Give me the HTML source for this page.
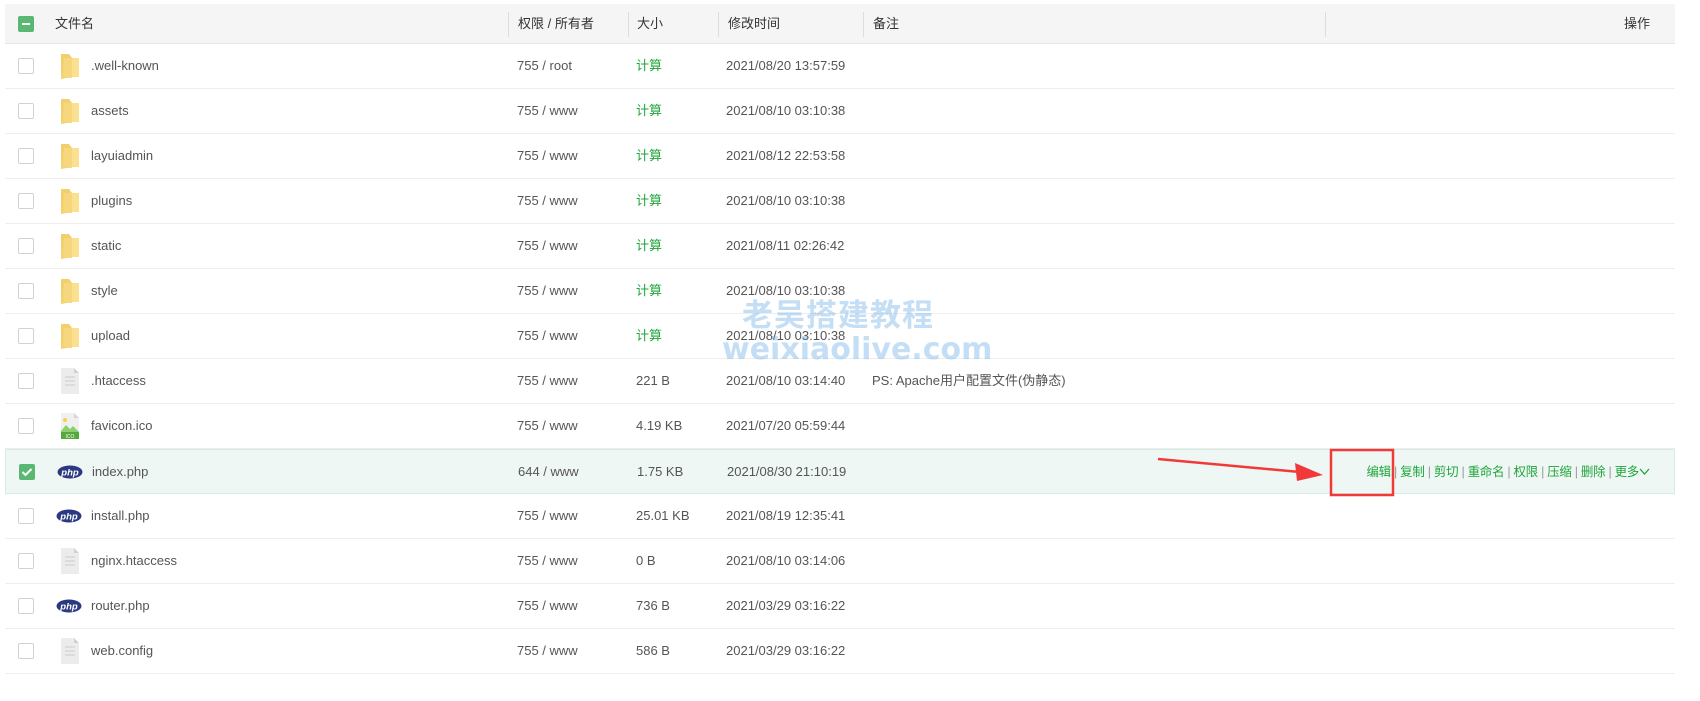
<!DOCTYPE html>
<html><head><meta charset="utf-8"><style>
*{margin:0;padding:0;box-sizing:border-box}
body{width:1700px;height:701px;background:#fff;font-family:"Liberation Sans","Noto Sans CJK SC",sans-serif;font-size:13px;color:#555;position:relative;overflow:hidden}
.hdr{position:absolute;left:5px;top:4px;width:1670px;height:40px;background:#f5f5f5;border-bottom:1px solid #e6e6e6;color:#333}
.row{position:absolute;left:5px;width:1670px;height:45px;border-bottom:1px solid #eee}
.row.sel{background:#eff7f5;border:1px solid #d5ece3}
.c{position:absolute;top:0;line-height:44px;white-space:nowrap}
.sep{position:absolute;top:9px;width:1px;height:25px;background:#ddd}
.cb{position:absolute;left:13px;top:14px;width:16px;height:16px;border:1px solid #d2d2d2;border-radius:2px;background:#fff}
.cb.on{background:#5bb872;border-color:#5bb872}
.g{color:#20a53a}
.ic{position:absolute;left:55px;top:10px}
.wm{position:absolute;color:rgba(100,170,230,.38);font-weight:bold;white-space:nowrap}
</style></head><body>
<div class="hdr">
<div class="cb on" style="top:12px"><div style="position:absolute;left:3px;top:6px;width:8px;height:2px;background:#fff"></div></div>
<div class="c" style="left:50px;line-height:40px">文件名</div>
<div class="sep" style="left:503px;top:8px"></div><div class="c" style="left:513px;line-height:40px">权限 / 所有者</div>
<div class="sep" style="left:623px;top:8px"></div><div class="c" style="left:632px;line-height:40px">大小</div>
<div class="sep" style="left:713px;top:8px"></div><div class="c" style="left:723px;line-height:40px">修改时间</div>
<div class="sep" style="left:858px;top:8px"></div><div class="c" style="left:868px;line-height:40px">备注</div>
<div class="sep" style="left:1320px;top:8px"></div><div class="c" style="right:25px;line-height:40px">操作</div>
</div>
<div id="rows"></div>
<script>
var d=[["f",".well-known","755 / root","计算","2021/08/20 13:57:59",""],
["f","assets","755 / www","计算","2021/08/10 03:10:38",""],
["f","layuiadmin","755 / www","计算","2021/08/12 22:53:58",""],
["f","plugins","755 / www","计算","2021/08/10 03:10:38",""],
["f","static","755 / www","计算","2021/08/11 02:26:42",""],
["f","style","755 / www","计算","2021/08/10 03:10:38",""],
["f","upload","755 / www","计算","2021/08/10 03:10:38",""],
["t",".htaccess","755 / www","221 B","2021/08/10 03:14:40","PS: Apache用户配置文件(伪静态)"],
["i","favicon.ico","755 / www","4.19 KB","2021/07/20 05:59:44",""],
["p","index.php","644 / www","1.75 KB","2021/08/30 21:10:19",""],
["p","install.php","755 / www","25.01 KB","2021/08/19 12:35:41",""],
["t","nginx.htaccess","755 / www","0 B","2021/08/10 03:14:06",""],
["p","router.php","755 / www","736 B","2021/03/29 03:16:22",""],
["t","web.config","755 / www","586 B","2021/03/29 03:16:22",""]];
var icons={
f:'<svg class="ic" width="20" height="26" viewBox="0 0 20 26" style="top:9px"><path d="M1 1h8l3 4v19l-11 2z" fill="#f1cf6b"/><path d="M4 5h15v19H4z" fill="#fbe08f"/><path d="M4 5h8v20H1z" fill="#f5d478" opacity=".8"/></svg>',
t:'<svg class="ic" width="20" height="26" viewBox="0 0 20 26" style="top:9px"><path d="M1 0h13l5 5v21H1z" fill="#ececec"/><path d="M14 0v5h5z" fill="#d0d0d0"/><path d="M5 9h10M5 13h10M5 17h10" stroke="#d6d6d6" stroke-width="1.5"/></svg>',
i:'<svg class="ic" width="20" height="26" viewBox="0 0 20 26" style="top:9px"><path d="M1 0h13l5 5v21H1z" fill="#f0f0f0"/><path d="M14 0v5h5z" fill="#d5d5d5"/><circle cx="5" cy="7" r="2" fill="#f3d34a"/><path d="M1 18l5-6 4 4 3-3 6 6v7H1z" fill="#8ccf6e"/><rect x="1" y="19" width="18" height="7" fill="#56a83c"/><text x="10" y="25" font-size="5" fill="#fff" text-anchor="middle" font-family="Liberation Sans">ICO</text></svg>',
p:'<svg class="ic" width="26" height="14" viewBox="0 0 26 14" style="top:15px;left:51px"><ellipse cx="13" cy="7" rx="12.5" ry="6.5" fill="#2b3a80"/><text x="13" y="10.5" font-size="9.5" font-style="italic" font-weight="bold" fill="#fff" text-anchor="middle" font-family="Liberation Sans">php</text></svg>'};
var h="";
d.forEach(function(r,i){
var sel=i==9;
h+='<div class="row'+(sel?' sel':'')+'" style="top:'+(44+45*i)+'px">'+
'<div class="cb'+(sel?' on':'')+'">'+(sel?'<svg width="14" height="14" viewBox="0 0 14 14"><path d="M2.5 7l3 3 6-6" stroke="#fff" stroke-width="2" fill="none"/></svg>':'')+'</div>'+
icons[r[0]]+
'<div class="c" style="left:86px">'+r[1]+'</div>'+
'<div class="c" style="left:512px">'+r[2]+'</div>'+
'<div class="c'+(r[3]=="计算"?' g':'')+'" style="left:631px">'+r[3]+'</div>'+
'<div class="c" style="left:721px">'+r[4]+'</div>'+
'<div class="c" style="left:867px">'+r[5]+'</div>'+
(sel?'<div class="c" style="right:24px;color:#999;font-size:12.5px;letter-spacing:-0.3px"><span class="g">编辑</span> | <span class="g">复制</span> | <span class="g">剪切</span> | <span class="g">重命名</span> | <span class="g">权限</span> | <span class="g">压缩</span> | <span class="g">删除</span> | <span class="g">更多<svg width="11" height="8" viewBox="0 0 11 8"><path d="M1 1l4.5 5 4.5-5" stroke="#20a53a" fill="none" stroke-width="1.3"/></svg></span></div>':'')+
'</div>';});
document.getElementById("rows").innerHTML=h;
</script>
<div class="wm" style="left:742px;top:290px;font-size:31px;letter-spacing:1px">老吴搭建教程</div>
<div class="wm" style="left:722px;top:332px;font-size:30px;font-family:'DejaVu Sans',sans-serif">weixiaolive.com</div>
<svg style="position:absolute;left:0;top:0" width="1700" height="701">
<path d="M1158 459L1300 472" stroke="#f03a3a" stroke-width="2.5"/>
<path d="M1323 475L1295 463L1297 481z" fill="#f03a3a"/>
<rect x="1331" y="450" width="62" height="45" fill="none" stroke="#f03a3a" stroke-width="2.5"/>
</svg>
</body></html>
